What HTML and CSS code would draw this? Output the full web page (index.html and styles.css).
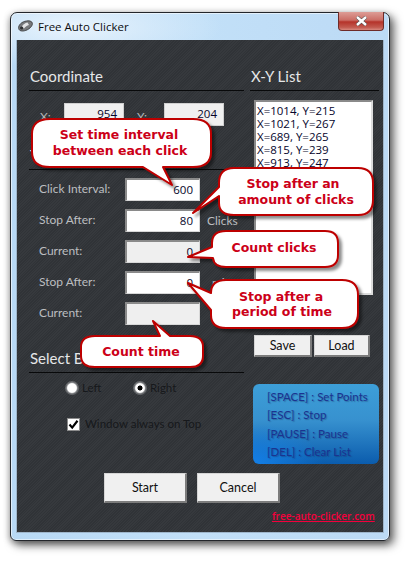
FILE: index.html
```html
<!DOCTYPE html>
<html lang="en">
<head>
<meta charset="utf-8">
<title>Free Auto Clicker</title>
<link rel="stylesheet" href="styles.css">
</head>
<body>
<div class="window">
  <div class="titlebar">
    <svg class="app-icon" width="15" height="12" viewBox="0 0 15 12">
      <path d="M.7 8.5 C0 5 4 1.5 8.5 1 C12.5 .3 15 2 14.3 4.5 C13.5 7.5 9 11 4.5 11 C2 11 1 10 .7 8.5Z" fill="#77797c" stroke="#3c3d40" stroke-width=".9"/>
      <path d="M4 6.5 C5 4.5 7 3.2 9.5 2.6 L11 5 C9 5.6 7.5 6.8 6 8.6Z" fill="#e2e3e5"/>
      <circle cx="3.6" cy="8" r="1.6" fill="#2f3033"/>
    </svg>
    <span class="title">Free Auto Clicker</span>
    <div class="close">
      <svg width="13" height="10" viewBox="0 0 13 10"><path d="M2 1 L11 9 M11 1 L2 9" stroke="#4a4a4a" stroke-width="3.6"/><path d="M2 1 L11 9 M11 1 L2 9" stroke="#fff" stroke-width="2.4"/></svg>
    </div>
  </div>
  <div class="client">
    <div class="columns">
      <section class="left">
        <h2 class="heading">Coordinate</h2>
        <div class="coords">
          <span class="coord-label">X:</span><div class="field field-readonly coord">954</div>
          <span class="coord-label coord-label-y">Y:</span><div class="field field-readonly coord">204</div>
        </div>
        <h2 class="heading heading-timer">Timer</h2>
        <div class="rows">
          <div class="row"><span class="row-label">Click Interval:</span><div class="field">600</div></div>
          <div class="row"><span class="row-label">Stop After:</span><div class="field">80</div><span class="suffix">Clicks</span></div>
          <div class="row"><span class="row-label">Current:</span><div class="field field-grey">0</div><span class="suffix">Clicks</span></div>
          <div class="row"><span class="row-label">Stop After:</span><div class="field">0</div><span class="suffix suffix-mins">mins</span></div>
          <div class="row"><span class="row-label">Current:</span><div class="field field-grey"></div></div>
        </div>
        <h2 class="heading heading-select">Select Button</h2>
        <div class="radios">
          <span class="radio"></span><span class="option option-left">Left</span>
          <span class="radio radio-on"></span><span class="option">Right</span>
        </div>
        <div class="always">
          <span class="check"><svg width="11" height="11" viewBox="0 0 11 11"><path d="M1.5 5.5 L4.2 8.6 L9.5 1.8" fill="none" stroke="#000" stroke-width="2.2"/></svg></span>
          <span class="option">Window always on Top</span>
        </div>
      </section>
      <section class="right">
        <h2 class="heading">X-Y List</h2>
        <div class="list">
          <div>X=1014, Y=215</div>
          <div>X=1021, Y=267</div>
          <div>X=689, Y=265</div>
          <div>X=815, Y=239</div>
          <div>X=913, Y=247</div>
        </div>
        <div class="list-actions">
          <button class="btn btn-save">Save</button>
          <button class="btn btn-load">Load</button>
        </div>
        <div class="keys">
          <div>[SPACE] : Set Points</div>
          <div>[ESC] : Stop</div>
          <div>[PAUSE] : Pause</div>
          <div>[DEL] : Clear List</div>
        </div>
      </section>
    </div>
    <div class="footer">
      <button class="btn btn-main btn-start">Start</button>
      <button class="btn btn-main">Cancel</button>
      <a class="site" href="#">free-auto-clicker.com</a>
    </div>
  </div>
</div>
<svg class="callouts" width="415" height="565" viewBox="0 0 415 565">
  <defs>
    <filter id="sh" x="-10%" y="-10%" width="125%" height="135%"><feDropShadow dx="3" dy="3" stdDeviation="1.6" flood-color="#000" flood-opacity=".45"/></filter>
  </defs>
  <g class="bubble" filter="url(#sh)">
    <path d="M50 119 H193 Q211 119 211 134 V152 Q211 167 193 167 H163 L172 185 L143 167 H50 Q32 167 32 152 V134 Q32 119 50 119Z"/>
    <path d="M234 168 H358 Q373 168 373 183 V200 Q373 215 358 215 H234 Q219 215 219 203 V196 L193 213 L219 187 V183 Q219 168 234 168Z"/>
    <path d="M226 231 H325 Q338 231 338 243 V255 Q338 267 325 267 H226 Q214 267 213 258 L188 257 L212 247 V243 Q212 231 226 231Z"/>
    <path d="M226 280 H342 Q358 280 358 295 V313 Q358 328 342 328 H226 Q211 328 211 315 V310 L188 283 L211 293 Q211 280 226 280Z"/>
    <path d="M95 336 H160 L153 321 L170 336 H190 Q203 336 203 347 V356 Q203 367 190 367 H95 Q81 367 81 356 V347 Q81 336 95 336Z"/>
  </g>
  <g class="bubble-text">
    <text x="119" y="139">Set time interval</text>
    <text x="120" y="155">between each click</text>
    <text x="293" y="188">Stop after an</text>
    <text x="296" y="204">amount of clicks</text>
    <text x="274" y="252">Count clicks</text>
    <text x="281" y="301">Stop after a</text>
    <text x="282" y="316">period of time</text>
    <text x="141" y="356">Count time</text>
  </g>
</svg>
</body>
</html>
```
FILE: styles.css
```css
* { box-sizing: border-box; }
html, body { margin: 0; height: 100%; }
body {
  position: relative;
  width: 415px;
  height: 565px;
  padding: 12px 0 0 10px;
  background: #fff;
  overflow: hidden;
  font-family: Lato, "Open Sans", sans-serif;
}
.window {
  width: 380px;
  height: 529px;
  padding: 0 5px 7px;
  display: flex;
  flex-direction: column;
  border: 1px solid #23262b;
  border-radius: 7px 7px 6px 6px;
  background:
    radial-gradient(ellipse 150px 42px at 60px 14px, #e9f4fd 0, rgba(233,244,253,0) 100%),
    linear-gradient(90deg, #b8d9f5, #c2e0f8 50%, #bcdaf5);
  box-shadow: 4px 4px 10px rgba(0,0,0,.6), -1px 2px 6px rgba(0,0,0,.28), inset 0 0 0 1px rgba(255,255,255,.55);
}
.titlebar {
  height: 27px;
  flex: none;
  display: flex;
  align-items: flex-start;
  position: relative;
}
.app-icon { margin: 7px 0 0 2px; }
.title {
  margin: 5px 0 0 5px;
  font-family: "Open Sans", sans-serif;
  font-size: 11.5px;
  line-height: 17px;
  color: #0d0d10;
}
.close {
  position: absolute;
  top: -1px;
  right: 0;
  width: 46px;
  height: 19px;
  display: flex;
  align-items: center;
  justify-content: center;
  border: 1px solid #6e2b28;
  border-top: 0;
  border-radius: 0 0 4px 4px;
  background: linear-gradient(#dd9d96, #cb6e66 45%, #b5332a 55%, #c25a4f 85%, #d8897f);
}
.client {
  flex: 1;
  min-height: 0;
  padding: 0 0 0 12px;
  border: 1px solid #9fb6cb;
  border-width: 0 1px 1px;
  background-color: #33363a;
  background-image: repeating-linear-gradient(135deg, #36393d 0 1px, #303337 1px 2px);
  display: flex;
  flex-direction: column;
}
.columns {
  display: flex;
  gap: 6px;
  height: 433px;
  flex: none;
}
.left { width: 215px; }
.right { width: 129px; }
.heading {
  margin: 0;
  height: 26px;
  padding: 0 0 0 1px;
  margin-top: 25px;
  font-size: 15px;
  line-height: 22px;
  font-weight: 400;
  color: #e6e7e8;
  border-bottom: 1px solid #08090a;
}
.coords {
  display: flex;
  align-items: center;
  margin-top: 12px;
  height: 23px;
}
.coord-label {
  width: 35px;
  padding-left: 11px;
  font-size: 12px;
  color: #b4b6b8;
  align-self: flex-start;
  margin-top: 6px;
}
.coord-label-y { width: 40px; padding-left: 13px; }
.field {
  width: 75px;
  height: 23px;
  padding: 0 6px 0 0;
  text-align: right;
  font-family: "Open Sans", sans-serif;
  font-size: 11.5px;
  line-height: 19px;
  color: #06062a;
  background: #fff;
  border: 1px solid #d8d8d8;
  border-top: 2px solid #8a8a8a;
  border-left: 2px solid #8a8a8a;
}
.field-readonly { background: #f0f0f0; }
.coord { width: 60px; border-width: 1px; border-color: #d0d0d0; }
.field-grey { background: #efefef; }
.heading-timer { margin-top: 18px; }
.rows {
  margin-top: 8px;
  display: flex;
  flex-direction: column;
  gap: 8px;
}
.row { display: flex; align-items: center; height: 23px; }
.row-label {
  width: 96px;
  padding: 0 0 2px 10px;
  font-size: 12px;
  color: #bcbec0;
}
.suffix { margin-left: 7px; font-size: 12px; color: #bcbec0; }
.suffix-mins { margin-left: 12px; }
.heading-select { margin-top: 22px; }
.radios {
  display: flex;
  align-items: center;
  margin: 7px 0 0 37px;
  height: 16px;
}
.radio {
  width: 12px;
  height: 12px;
  border-radius: 50%;
  background: radial-gradient(circle, #fff 55%, #ddd);
  border: 1px solid #8d8f92;
  box-shadow: 0 0 0 1px rgba(255,255,255,.25);
}
.radio-on { background: radial-gradient(circle, #000 0 2.2px, #fff 2.8px 55%, #ddd); }
.option { font-size: 11.5px; line-height: 16px; color: #16181b; }
.radios .option { margin-left: 4px; }
.option-left { width: 52px; }
.always {
  display: flex;
  align-items: center;
  gap: 5px;
  margin: 20px 0 0 38px;
  height: 16px;
}
.check {
  width: 13px;
  height: 13px;
  display: flex;
  align-items: center;
  justify-content: center;
  background: #fff;
  border: 1px solid #8c8c8c;
}
.list {
  margin: 9px 0 0 4px;
  width: 119px;
  height: 195px;
  padding: 2px 0 0 1px;
  background: #fff;
  border: 2px solid #8a8a8a;
  border-right-color: #dcdcdc;
  border-bottom-color: #dcdcdc;
  font-family: "Open Sans", sans-serif;
  font-size: 11.5px;
  line-height: 13px;
  color: #05052c;
}
.list-actions {
  display: flex;
  gap: 2px;
  margin: 40px 0 0 4px;
}
.btn {
  flex: none;
  padding: 0;
  height: 22px;
  font-family: inherit;
  font-size: 12.5px;
  color: #111;
  background: #f0f0f0;
  border: 1px solid #d5d5d5;
  border-right: 2px solid #7c7c7c;
  border-bottom: 2px solid #7c7c7c;
}
.btn-save { width: 58px; }
.btn-load { width: 56px; }
.keys {
  margin: 27px 0 0 3px;
  width: 126px;
  height: 80px;
  padding: 4px 0 0 14px;
  border-radius: 6px;
  background:
    radial-gradient(ellipse 70px 40px at 0 100%, #1480e8 0, rgba(20,128,232,0) 100%),
    linear-gradient(#3d9fd8, #3791cf 45%, #0b5cad);
  font-size: 11.5px;
  line-height: 18.3px;
  white-space: nowrap;
  color: #1b3390;
  text-shadow: 1px 1px 1px rgba(20,40,80,.35);
}
.footer {
  display: flex;
  gap: 10px;
  margin: 0 0 0 75px;
  height: 30px;
}
.btn-main { width: 83px; height: 30px; }
.site {
  flex: none;
  margin: 36px 0 0 -18px;
  height: 14px;
  font-family: "Open Sans", sans-serif;
  font-size: 10px;
  font-weight: 600;
  line-height: 14px;
  white-space: nowrap;
  color: #f5003c;
  text-decoration: underline;
}
.callouts {
  position: absolute;
  left: 0;
  top: 0;
  pointer-events: none;
}
.bubble path {
  fill: #fff;
  stroke: #bd0000;
  stroke-width: 2;
  stroke-linejoin: round;
}
.bubble-text text {
  font-family: "DejaVu Sans", sans-serif;
  font-size: 12.5px;
  font-weight: 700;
  fill: #cc0018;
  text-anchor: middle;
}
```
